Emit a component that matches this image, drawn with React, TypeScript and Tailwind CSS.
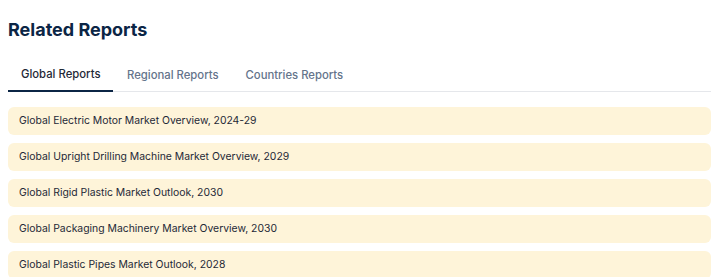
const reports = [
  "Global Electric Motor Market Overview, 2024-29",
  "Global Upright Drilling Machine Market Overview, 2029",
  "Global Rigid Plastic Market Outlook, 2030",
  "Global Packaging Machinery Market Overview, 2030",
  "Global Plastic Pipes Market Outlook, 2028",
];

const tabs = ["Global Reports", "Regional Reports", "Countries Reports"];

export default function App() {
  return (
    <div
      className="w-[721px] h-[277px] overflow-hidden bg-white pl-2 pr-[10px] pt-[17px]"
      style={{ fontFamily: "Inter, 'Noto Sans', sans-serif" }}
    >
      <h2 className="text-[18px] leading-[26px] font-bold text-[#0b2545]">Related Reports</h2>
      <div className="mt-[16px] flex border-b border-[#e5e7eb]">
        {tabs.map((tab, i) => (
          <button
            key={tab}
            className={
              i === 0
                ? "px-[13px] pt-[7px] pb-[8px] text-[11.3px] leading-[16px] font-medium text-[#1f2937] border-b-2 border-[#0b2545] -mb-px"
                : "px-[13.5px] pt-[7px] pb-[8px] text-[11.3px] leading-[16px] font-medium text-[#64748b]"
            }
          >
            {tab}
          </button>
        ))}
      </div>
      <div className="mt-[15px] flex flex-col gap-2">
        {reports.map((r) => (
          <div
            key={r}
            className="h-[28px] flex items-center rounded-md bg-[#fef4d9] px-[11px] text-[10.4px] text-[#1f2937]"
          >
            {r}
          </div>
        ))}
      </div>
    </div>
  );
}
